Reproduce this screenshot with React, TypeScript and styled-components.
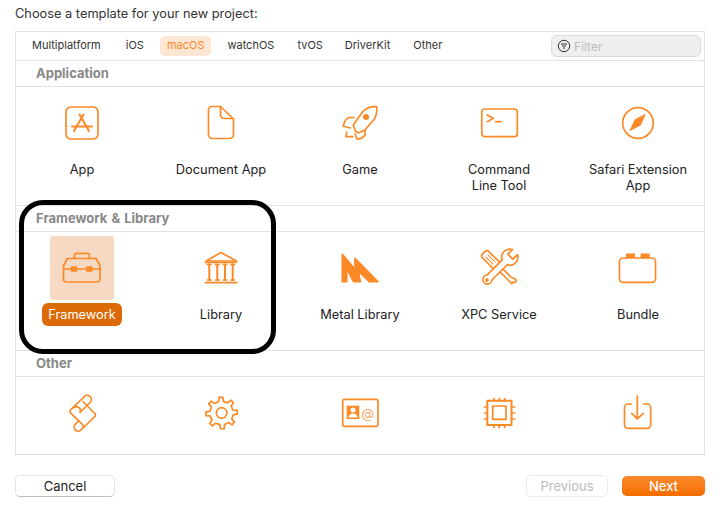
import React from "react";
import styled, { createGlobalStyle } from "styled-components";

const orange = "#fb8a26";

const GlobalStyle = createGlobalStyle`
  html, body {
    margin: 0;
    padding: 0;
    background: #fff;
    font-family: Inter, "Liberation Sans", sans-serif;
    color: #222;
  }
  * {
    box-sizing: border-box;
  }
`;

const Page = styled.div`
  width: 720px;
  height: 514px;
  padding: 0 15px;
  background: #fff;
  overflow: hidden;
`;
const Title = styled.div`
  height: 31px;
  padding-top: 6px;
  font-size: 12.8px;
  line-height: 16px;
  color: #333;
`;
const Panel = styled.div`
  position: relative;
  height: 424px;
  border: 1px solid #e3e3e3;
`;
const TabBar = styled.div`
  display: flex;
  align-items: center;
  height: 29px;
  padding: 0 3px 0 9px;
  border-bottom: 1px solid #e3e3e3;
`;
const Tab = styled.div<{ $active?: boolean }>`
  height: 20px;
  padding: 0 7px;
  margin-right: 9px;
  border-radius: 5px;
  font-size: 11px;
  line-height: 19px;
  color: ${({ $active }) => ($active ? "#f98a2b" : "#333")};
  background: ${({ $active }) => ($active ? "#fde6d3" : "transparent")};
  &:first-child {
    margin-right: 11px;
  }
  &:nth-child(5) {
    margin-right: 8px;
  }
`;
const FilterField = styled.div`
  display: flex;
  align-items: center;
  gap: 3px;
  width: 150px;
  height: 22px;
  margin-left: auto;
  padding-left: 5px;
  border: 1px solid #d9d9d9;
  border-radius: 6px;
  background: #efefef;
  font-size: 12px;
  color: #bdbdbd;
`;
const SectionHeader = styled.div`
  height: 26px;
  padding-left: 20px;
  border-bottom: 1px solid #e3e3e3;
  font-size: 13px;
  font-weight: 700;
  word-spacing: 1px;
  line-height: 24px;
  color: #888;
`;
const IconGrid = styled.div<{ $last?: boolean }>`
  display: grid;
  grid-template-columns: repeat(5, 132px);
  column-gap: 7px;
  height: ${({ $last }) => ($last ? "77px" : "119px")};
  border-bottom: ${({ $last }) => ($last ? "none" : "1px solid #e3e3e3")};
`;
const Cell = styled.div`
  display: flex;
  flex-direction: column;
  align-items: center;
  padding-top: 4px;
`;
const IconTile = styled.div<{ $selected?: boolean }>`
  display: flex;
  align-items: center;
  justify-content: center;
  width: 64px;
  height: 64px;
  border-radius: 3px;
  background: ${({ $selected }) => ($selected ? "#f5d9c2" : "transparent")};
`;
const Label = styled.div<{ $selected?: boolean }>`
  margin-top: 3px;
  padding: 4px 6px 3px;
  border-radius: 6px;
  font-size: 12.8px;
  line-height: 16px;
  text-align: center;
  color: ${({ $selected }) => ($selected ? "#fff" : "#222")};
  background: ${({ $selected }) => ($selected ? "#dd6a08" : "transparent")};
`;
const Callout = styled.div`
  position: absolute;
  left: 3px;
  top: 168px;
  width: 257px;
  height: 154px;
  border: 5px solid #000;
  border-radius: 24px;
  pointer-events: none;
`;
const Footer = styled.div`
  display: flex;
  align-items: center;
  margin-top: 20px;
  height: 22px;
`;
const Button = styled.div`
  display: flex;
  align-items: center;
  justify-content: center;
  height: 22px;
  border-radius: 5px;
  font-size: 13px;
`;
const CancelButton = styled(Button)`
  width: 100px;
  background: #fff;
  color: #222;
  border: 1px solid #e4e4e4;
  border-bottom-color: #bdbdbd;
`;
const PreviousButton = styled(Button)`
  width: 82px;
  margin-left: auto;
  margin-right: 14px;
  color: #bcbcbc;
  background: #fff;
  border: 1px solid #ececec;
`;
const NextButton = styled(Button)`
  width: 83px;
  height: 20px;
  color: #fff;
  font-weight: 500;
  background: linear-gradient(#fa8a2c, #f56c00);
`;

const Icon = styled.svg.attrs({
  width: 48,
  height: 48,
  viewBox: "0 0 48 48",
  fill: "none",
  stroke: orange,
  strokeWidth: 1.7,
  strokeLinecap: "round",
  strokeLinejoin: "round",
})`
  display: block;
`;

function gearPath() {
  const cx = 24.6;
  const cy = 24;
  const pts: string[] = [];
  for (let i = 0; i < 8; i++) {
    const a = (i * Math.PI) / 4 - Math.PI / 8;
    const step = Math.PI / 4;
    [
      [11.8, -0.02],
      [15.8, 0.2],
      [15.8, 0.8],
      [11.8, 1.02],
    ].forEach(([r, t]) => {
      const ang = a + t * step * 0.5 + step * 0.25 - 0.05;
      pts.push(`${(cx + r * Math.cos(ang)).toFixed(2)},${(cy + r * Math.sin(ang)).toFixed(2)}`);
    });
  }
  return "M" + pts.join(" L") + " Z";
}

const icons: Record<string, React.ReactNode> = {
  app: (
    <Icon>
      <rect x="8" y="8" width="32" height="32" rx="5" />
      <path d="M21.5 15.5 31 32M25.5 15.5 16 32M14 27.5h20" strokeWidth="2" />
    </Icon>
  ),
  doc: (
    <Icon>
      <path d="M15 7.5h8.5L36.5 20v15.5a4 4 0 0 1-4 4H15.500a4 4 0 0 1-4-4V11a3.500 3.500 0 0 1 3.500-3.500Z" />
      <path d="M23.500 7.500v8a4 4 0 0 0 4 4h9" />
    </Icon>
  ),
  rocket: (
    <Icon strokeWidth="1.5">
      <path d="M40.700 7.700c-5-.6-10 1-14 5L17.300 26l2 6 3 2 6.700-3 10-11.700c1.400-4 2.300-8 1.700-11.300Z" />
      <circle cx="30" cy="18" r="3" fill={orange} stroke="none" />
      <path d="M18 18.500H13c-2.500 1-5 4.500-5.700 8.700l7 1.800M29 31v5c-1.500 2.500-5 4-8 4l-2-5M10.700 33l-.7 4.700h6.700" />
    </Icon>
  ),
  terminal: (
    <Icon>
      <rect x="6.800" y="10" width="35.500" height="27.700" rx="3" />
      <path d="m12.300 16 6 3.300-6 3.400M20.500 22.700H26" />
    </Icon>
  ),
  compass: (
    <Icon>
      <circle cx="24" cy="24" r="15.300" />
      <path d="M31 15.800 26.500 26 16 31.500 21 21Z" fill={orange} strokeWidth="1" />
    </Icon>
  ),
  toolbox: (
    <Icon>
      <path d="M9.500 14.500H38l4 7v14a2.500 2.500 0 0 1-2.500 2.500H8a2.500 2.500 0 0 1-2.500-2.500v-14Z" />
      <path d="M16.500 14.500v-3.500a1.700 1.700 0 0 1 1.700-1.700h11.500a1.700 1.700 0 0 1 1.700 1.700v3.500M5.500 25h37" />
      <rect x="12.700" y="22.300" width="6.600" height="5.400" rx="1" fill={orange} stroke="none" />
      <rect x="28" y="22.300" width="6.600" height="5.400" rx="1" fill={orange} stroke="none" />
    </Icon>
  ),
  library: (
    <Icon strokeLinecap="butt">
      <path d="M9 17 24 8.500 39.500 17Z" />
      <path d="M8.500 18.500h31M8.500 38.700h31" />
      <path d="M12.300 20.500V36M20.300 20.500V36M28 20.500V36M35.700 20.500V36" strokeWidth="2" />
      <path d="M10.500 20.500h3.500M18.500 20.500H22M26.200 20.500h3.500M34 20.500h3.500M10.500 36H14M18.500 36H22M26.200 36h3.500M34 36h3.500" />
    </Icon>
  ),
  metal: (
    <Icon stroke="none">
      <path
        d="M6.300 10.300 19 25.300v-11l22.700 23.400h-8.400L22 27l2.500 10.700h-7L10.700 24.300v13.400H6.300Z"
        fill={orange}
      />
    </Icon>
  ),
  xpc: (
    <Icon strokeWidth="1.5">
      <g transform="rotate(-45 24 24)">
        <path d="M19.500 5a2.500 2.500 0 0 1 2.500-2.500h4a2.500 2.500 0 0 1 2.500 2.500v16h-9ZM22 21h4v18l1.500 3v2a1.500 1.500 0 0 1-3 0h-1a1.500 1.500 0 0 1-1.500 0v-5Z" />
        <path d="M22.500 7v10M25.500 7v10" strokeWidth="1" />
      </g>
      <g transform="rotate(45 24 24)">
        <path
          d="M20.500 1.500a8 8 0 0 0 0 14.500V37.500a4.500 4.500 0 1 0 7 0V16a8 8 0 0 0 0-14.500V8h-7Z"
          fill="#fff"
        />
        <circle cx="24" cy="41" r="1" fill={orange} />
      </g>
    </Icon>
  ),
  bundle: (
    <Icon>
      <rect x="5.500" y="14" width="36" height="24.300" rx="3.500" />
      <rect x="12" y="9.500" width="9" height="4.500" fill={orange} stroke="none" />
      <rect x="26.700" y="9.500" width="9" height="4.500" fill={orange} stroke="none" />
    </Icon>
  ),
  script: (
    <Icon strokeWidth="1.5">
      <path d="M26 8 12.500 20.800a2 2 0 0 0 0 3L25 36M26 8a4 4 0 0 1 6.500 5L22 23.500M36.800 24.500a2 2 0 0 1 0 3L23.500 40.500a4 4 0 0 1-6.500-5l4-4M25 12.500l11.800 12M25 36a4 4 0 0 1-1.500 4.500M22 23.500a4 4 0 0 0-6-5" />
    </Icon>
  ),
  gear: (
    <Icon>
      <path d={gearPath()} />
      <circle cx="24.600" cy="24" r="5.300" />
    </Icon>
  ),
  contact: (
    <Icon>
      <rect x="6.700" y="10.300" width="35.300" height="27" rx="2" />
      <rect x="10.700" y="16.700" width="12.600" height="13.300" fill={orange} stroke="none" />
      <circle cx="17" cy="21" r="2.500" fill="#fff" stroke="none" />
      <path d="M12.500 28.500c.5-3 2-4 4.500-4s4 1 4.500 4Z" fill="#fff" stroke="none" />
      <text x="31.700" y="28.500" textAnchor="middle" fontSize="13" stroke="none" fill="#f7a868" fontFamily="Inter, sans-serif">@</text>
    </Icon>
  ),
  chip: (
    <Icon strokeLinecap="butt">
      <rect x="12.300" y="11.800" width="24.200" height="24.200" strokeWidth="2" />
      <rect x="17.700" y="17" width="13.300" height="13.300" />
      <path d="M19 9.500v2M24.300 9.500v2M29.700 9.500v2M19 36.500v2M24.300 36.500v2M29.700 36.500v2M9.500 18h3M9.500 24h3M9.500 30h3M36.500 18h3M36.500 24h3M36.500 30h3" />
    </Icon>
  ),
  importIcon: (
    <Icon>
      <path d="M17.500 15H14a3.500 3.500 0 0 0-3.500 3.500v17.300a3.500 3.500 0 0 0 3.500 3.500h19.200a3.500 3.500 0 0 0 3.500-3.500V18.500a3.500 3.500 0 0 0-3.500-3.500h-3.700" />
      <path d="M23.300 7v22.500M17.700 24.300l5.600 5.500 6-5.500" />
    </Icon>
  ),
};

type Item = { icon?: string; label?: string[]; selected?: boolean };

const sections: { title?: string; items: Item[]; last?: boolean }[] = [
  {
    title: "Application",
    items: [
      { icon: "app", label: ["App"] },
      { icon: "doc", label: ["Document App"] },
      { icon: "rocket", label: ["Game"] },
      { icon: "terminal", label: ["Command", "Line Tool"] },
      { icon: "compass", label: ["Safari Extension", "App"] },
    ],
  },
  {
    title: "Framework & Library",
    items: [
      { icon: "toolbox", label: ["Framework"], selected: true },
      { icon: "library", label: ["Library"] },
      { icon: "metal", label: ["Metal Library"] },
      { icon: "xpc", label: ["XPC Service"] },
      { icon: "bundle", label: ["Bundle"] },
    ],
  },
  {
    title: "Other",
    last: true,
    items: [
      { icon: "script" },
      { icon: "gear" },
      { icon: "contact" },
      { icon: "chip" },
      { icon: "importIcon" },
    ],
  },
];

const tabs = ["Multiplatform", "iOS", "macOS", "watchOS", "tvOS", "DriverKit", "Other"];

export default function App() {
  return (
    <Page>
      <GlobalStyle />
      <Title>Choose a template for your new project:</Title>
      <Panel>
        <TabBar>
          {tabs.map((t) => (
            <Tab key={t} $active={t === "macOS"}>
              {t}
            </Tab>
          ))}
          <FilterField>
            <svg width="14" height="14" viewBox="0 0 14 14" fill="none" stroke="#333" strokeWidth="1">
              <circle cx="7" cy="7" r="5.700" />
              <path d="M4 5h6M5 7h4M6 9h2" />
            </svg>
            Filter
          </FilterField>
        </TabBar>
        {sections.map((s) => (
          <React.Fragment key={s.title}>
            <SectionHeader>{s.title}</SectionHeader>
            <IconGrid $last={s.last}>
              {s.items.map((item) => (
                <Cell key={item.icon}>
                  <IconTile $selected={item.selected}>{icons[item.icon!]}</IconTile>
                  {item.label && (
                    <Label $selected={item.selected}>
                      {item.label.map((line) => (
                        <div key={line}>{line}</div>
                      ))}
                    </Label>
                  )}
                </Cell>
              ))}
            </IconGrid>
          </React.Fragment>
        ))}
        <Callout />
      </Panel>
      <Footer>
        <CancelButton>Cancel</CancelButton>
        <PreviousButton>Previous</PreviousButton>
        <NextButton>Next</NextButton>
      </Footer>
    </Page>
  );
}
